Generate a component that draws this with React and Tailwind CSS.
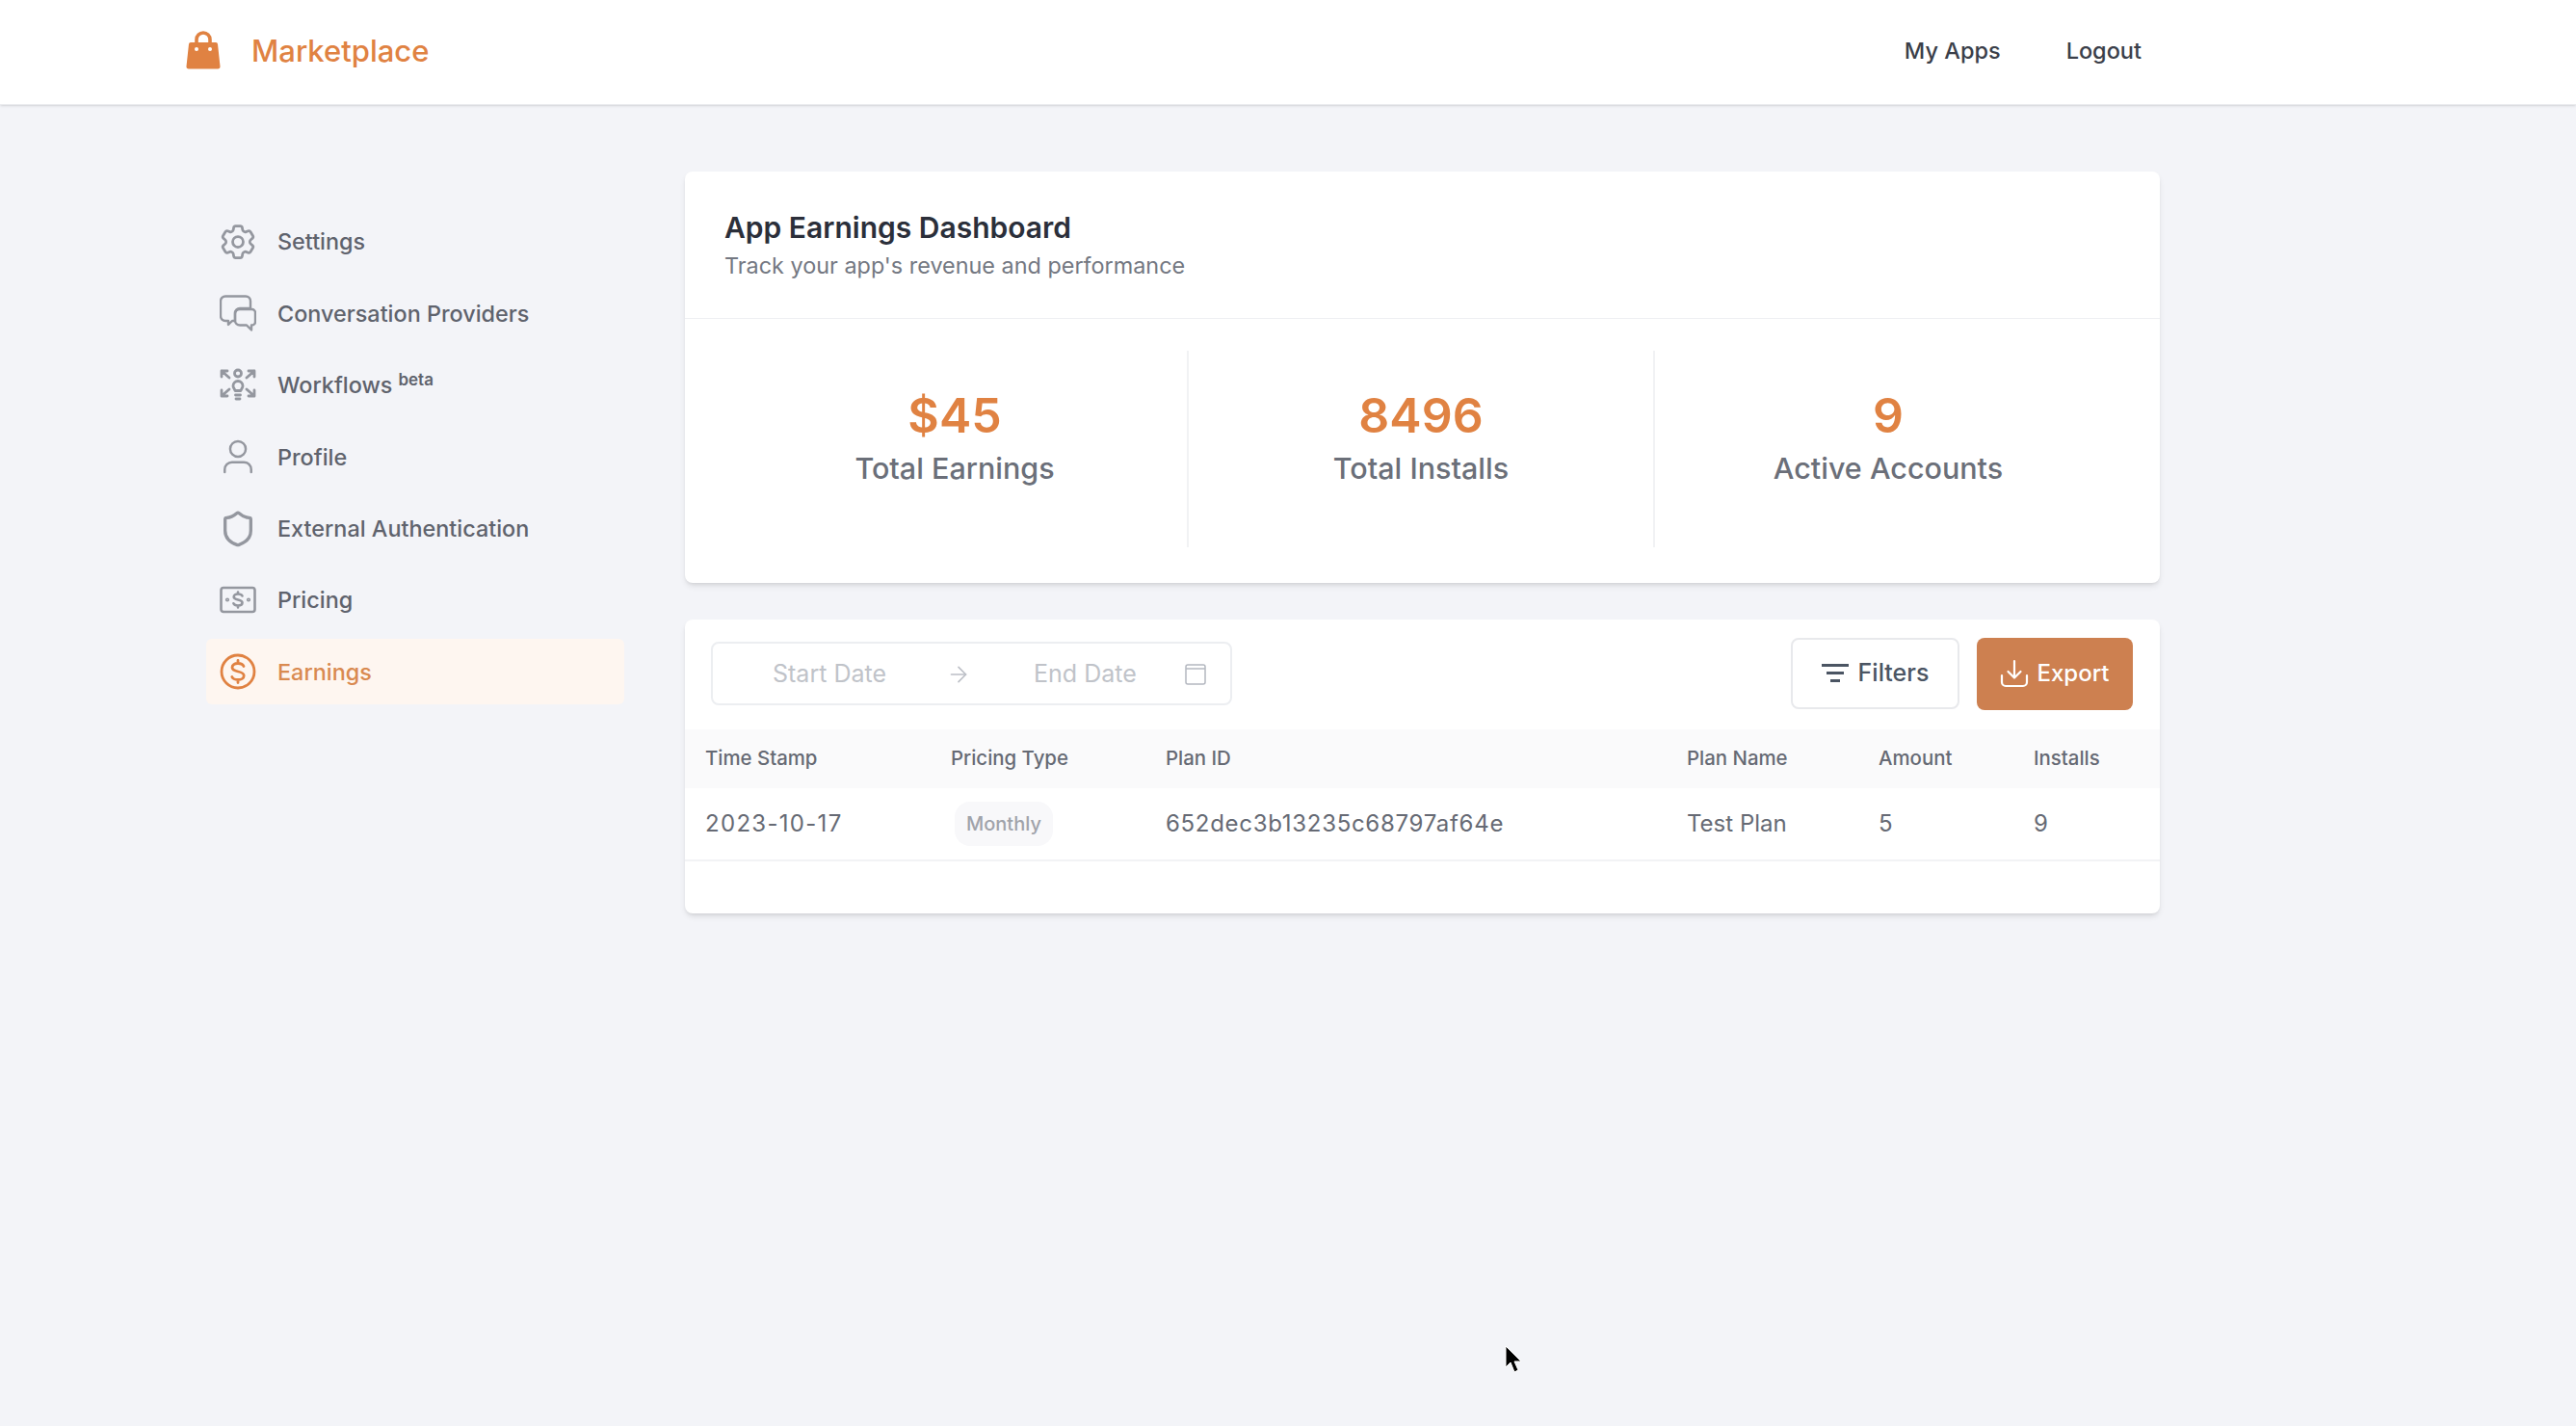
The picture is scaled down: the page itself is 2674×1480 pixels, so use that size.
import { HiOutlineCog6Tooth } from "react-icons/hi2";
import { Shield, ArrowRight } from "lucide-react";

function BagIcon() {
  return (
    <svg viewBox="0 0 36 40" className="mb-[4px] h-[40px] w-[36px] text-[#e08242]">
      <path d="M11 14V9a7 7 0 0 1 14 0v5" fill="none" stroke="currentColor" strokeWidth="3.600" />
      <path d="M5 12h26a2 2 0 0 1 2 1.800l2.500 23a2.500 2.500 0 0 1-2.500 2.700H3a2.500 2.500 0 0 1-2.500-2.700L3 13.800A2 2 0 0 1 5 12z" fill="currentColor" />
      <circle cx="11" cy="19" r="2" fill="#fff" />
      <circle cx="25" cy="19" r="2" fill="#fff" />
    </svg>
  );
}

function ChatIcon({ className }) {
  return (
    <svg viewBox="0 0 38 38" fill="none" stroke="currentColor" strokeWidth="2.4" strokeLinejoin="round" strokeLinecap="round" className={className}>
      <path d="M6 1.500h21a5 5 0 0 1 5 5V14H21a5 5 0 0 0-5 5v8h-3l-4 4v-4H6a5 5 0 0 1-5-5V6.500a5 5 0 0 1 5-5z" />
      <path d="M21 15h12.500a3.500 3.500 0 0 1 3.500 3.500v9.500a3.500 3.500 0 0 1-3.500 3.500H33v5l-5-5h-7a5 5 0 0 1-5-5v-6.500a5 5 0 0 1 5-5z" />
    </svg>
  );
}

function WorkflowIcon({ className }) {
  return (
    <svg viewBox="0 0 38 38" fill="none" stroke="currentColor" strokeWidth="2.8" strokeLinejoin="round" strokeLinecap="round" className={className}>
      <circle cx="19" cy="6.500" r="3.500" />
      <path d="M14 19.500a5 5 0 1 1 10 0c0 2-1.500 3-2 5h-6c-.5-2-2-3-2-5z" />
      <path d="M16.500 29h5M17 33h4" />
      <path d="M10 11L2 4M2 10V4h6" />
      <path d="M28 11l8-7M36 10V4h-6" />
      <path d="M10 23l-8 7M2 24v6h6" />
      <path d="M28 23l8 7M36 24v6h-6" />
    </svg>
  );
}

function ProfileIcon({ className }) {
  return (
    <svg viewBox="0 0 38 38" fill="none" stroke="currentColor" strokeWidth="2.600" strokeLinecap="round" className={className}>
      <circle cx="19" cy="10.500" r="8.500" />
      <path d="M4.500 36v-3a8 8 0 0 1 8-8h13a8 8 0 0 1 8 8v3" />
    </svg>
  );
}

function PricingIcon({ className }) {
  return (
    <svg viewBox="0 0 38 38" fill="none" stroke="currentColor" strokeWidth="2.600" strokeLinecap="round" className={className}>
      <rect x="1.500" y="6" width="35" height="25" rx="2.500" />
      <path d="M23.500 14.500c-.6-1.300-2.300-2-4.500-2-2.500 0-4.300 1.100-4.300 3 0 4 8.800 2 8.800 6 0 1.900-1.900 3-4.500 3-2.300 0-4-.8-4.600-2.200M19 10.500v2M19 24.500v2" />
      <circle cx="8" cy="18.500" r=".8" />
      <circle cx="30" cy="18.500" r=".8" />
    </svg>
  );
}

function DollarIcon({ className }) {
  return (
    <svg viewBox="0 0 38 38" fill="none" stroke="currentColor" strokeWidth="2.800" strokeLinecap="round" className={className}>
      <circle cx="19" cy="19" r="17" />
      <path d="M25 13.500c-.8-1.900-3-3-6-3-3.500 0-6 1.700-6 4.300 0 5.700 12.200 2.700 12.200 8.400 0 2.600-2.700 4.300-6.200 4.300-3 0-5.300-1.100-6.200-3M19 7.500v3M19 27.500v3" />
    </svg>
  );
}

function FilterIcon() {
  return (
    <svg viewBox="0 0 28 22" className="h-[22px] w-[28px] fill-[#4b5563]">
      <rect x="0" y="1" width="28" height="3" />
      <rect x="5" y="9" width="18" height="3" />
      <rect x="9" y="17" width="10" height="3" />
    </svg>
  );
}

function ExportIcon() {
  return (
    <svg viewBox="0 0 30 30" fill="none" stroke="currentColor" strokeWidth="2.200" strokeLinecap="round" strokeLinejoin="round" className="h-[30px] w-[30px]">
      <path d="M15 2v17M8.500 13l6.500 6.500 6.500-6.500" />
      <path d="M2 17v7a4 4 0 0 0 4 4h18a4 4 0 0 0 4-4v-7" />
    </svg>
  );
}

function CalendarIcon() {
  return (
    <svg viewBox="0 0 24 24" fill="none" stroke="currentColor" strokeWidth="1.500" className="h-[24px] w-[24px] text-[#b4b8c0]">
      <rect x="2" y="2" width="20" height="20" rx="2" />
      <path d="M2 6h20" />
    </svg>
  );
}

const navItems = [
  { label: "Settings", icon: HiOutlineCog6Tooth, size: "h-[44px] w-[44px]" },
  { label: "Conversation Providers", icon: ChatIcon, size: "h-[38px] w-[38px]" },
  { label: "Workflows", icon: WorkflowIcon, size: "h-[38px] w-[38px]", beta: true },
  { label: "Profile", icon: ProfileIcon, size: "h-[36px] w-[36px]" },
  { label: "External Authentication", icon: Shield, size: "h-[40px] w-[40px]" },
  { label: "Pricing", icon: PricingIcon, size: "h-[38px] w-[38px]" },
  { label: "Earnings", icon: DollarIcon, size: "h-[38px] w-[38px]", active: true },
];

const stats = [
  { value: "$45", label: "Total Earnings" },
  { value: "8496", label: "Total Installs" },
  { value: "9", label: "Active Accounts" },
];

const headers = ["Time Stamp", "Pricing Type", "Plan ID", "Plan Name", "Amount", "Installs"];

export default function App() {
  return (
    <div className="relative min-h-screen overflow-hidden bg-[#f3f4f8] font-[Inter,sans-serif]">

      {/* HEADER */}
      <header className="flex h-[109px] items-center justify-between border-b border-[#eaebee] bg-white pl-[193px] pr-[451px] shadow-sm">
        <div className="flex items-center">
          <BagIcon />
          <span className="mb-[2px] ml-[32px] text-[31px] font-medium text-[#e08242]">Marketplace</span>
        </div>
        <nav className="mb-[2px] flex gap-[68px] text-[23.5px] font-medium text-[#3b3f4a]">
          <span>My Apps</span>
          <span>Logout</span>
        </nav>
      </header>

      <div className="flex pl-[214px]">

        {/* SIDEBAR */}
        <aside className="flex w-[434px] shrink-0 flex-col gap-[6.4px] pt-[108px]">
          {navItems.map((item) => {
            const Icon = item.icon;
            return (
              <div
                key={item.label}
                className={
                  item.active
                    ? "flex h-[68px] items-center rounded-md bg-[#fef6f0] text-[#d98a50]"
                    : "flex h-[68px] items-center rounded-md text-[#5f636d]"
                }
              >
                <span className={item.active ? "mr-[8px] flex w-[66px] justify-center text-[#e08242]" : "mr-[8px] flex w-[66px] justify-center text-[#94979f]"}>
                  <Icon className={item.size} />
                </span>
                <span className="text-[23.4px] font-medium">{item.label}</span>
                {item.beta && <span className="mb-[10px] ml-[6px] text-[17px] font-semibold">beta</span>}
              </div>
            );
          })}
        </aside>

        {/* MAIN */}
        <main className="ml-[63px] w-[1531px] pt-[69px]">
          <section className="rounded-lg bg-white shadow-md">
            <div className="h-[153px] border-b border-[#eeeff2] pl-[41px] pt-[36px]">
              <h1 className="text-[30px] font-semibold leading-[44px] text-[#2b2f3a]">App Earnings Dashboard</h1>
              <p className="text-[23.4px] leading-[36px] text-[#747882]">Track your app's revenue and performance</p>
            </div>
            <div className="grid h-[274px] grid-cols-3 pb-[37px] pl-[39px] pr-[40px] pt-[33px]">
              {stats.map((stat, i) => (
                <div key={stat.label} className={i < 2 ? "border-r-2 border-[#f1f2f4] pt-[34px] text-center" : "pt-[34px] text-center"}>
                  <div className="text-[50px] font-semibold leading-[66px] text-[#e08242]">{stat.value}</div>
                  <div className="text-[30.5px] font-medium leading-[44px] text-[#6b6f79]">{stat.label}</div>
                </div>
              ))}
            </div>
          </section>

          <section className="mt-[38px] rounded-lg bg-white pb-[54px] shadow-md">
            <div className="flex h-[114px] items-center justify-between pb-[2px] pl-[27px] pr-[28px]">
              <div className="flex h-[66px] w-[541px] items-center rounded-lg border-2 border-[#eceef1] pl-[62px] pt-[2px] text-[25px] text-[#c0c3c9]">
                <span className="w-[180px]">Start Date</span>
                <ArrowRight className="h-[26px] w-[26px] text-[#bcbfc6]" strokeWidth={1.5} />
                <span className="ml-[65px] w-[156px]">End Date</span>
                <CalendarIcon />
              </div>
              <div className="flex gap-[18px]">
                <button className="flex h-[74px] w-[175px] items-center justify-center gap-[10px] rounded-lg border-2 border-[#e8e9ec] text-[25px] font-medium text-[#4b5563]">
                  <FilterIcon />
                  Filters
                </button>
                <button className="flex h-[75px] w-[162px] items-center justify-center gap-[8px] rounded-lg bg-[#cd8050] text-[24px] font-medium text-white">
                  <ExportIcon />
                  Export
                </button>
              </div>
            </div>

            <table className="w-full table-fixed border-collapse text-left">
              <colgroup>
                <col className="w-[255px]" />
                <col className="w-[223px]" />
                <col className="w-[541px]" />
                <col className="w-[199px]" />
                <col className="w-[161px]" />
                <col />
              </colgroup>
              <thead>
                <tr className="h-[61px] bg-[#fafafb] text-[20.4px] font-medium text-[#666a74]">
                  {headers.map((h) => (
                    <th key={h} className="pl-[21px] font-medium">{h}</th>
                  ))}
                </tr>
              </thead>
              <tbody>
                <tr className="h-[75px] border-b-2 border-[#f2f3f5] text-[24px] text-[#666a74]">
                  <td className="pl-[21px] tracking-[1.3px]">2023-10-17</td>
                  <td className="pl-[25px]">
                    <span className="inline-block rounded-2xl bg-[#f8f8fa] px-[12px] py-[8px] text-[20px] font-medium leading-[30px] text-[#a0a3aa]">Monthly</span>
                  </td>
                  <td className="pl-[21px] tracking-[0.7px]">652dec3b13235c68797af64e</td>
                  <td className="pl-[21px]">Test Plan</td>
                  <td className="pl-[21px]">5</td>
                  <td className="pl-[21px]">9</td>
                </tr>
              </tbody>
            </table>
          </section>
        </main>
      </div>

      {/* mouse pointer from the recording */}
      <svg viewBox="0 0 18 30" className="absolute left-[1562px] top-[1396px] h-[30px] w-[18px]">
        <path d="M1 1v22l5-5 4 10 4-2-4-9h7z" fill="#000" stroke="#fff" strokeWidth="1" />
      </svg>
    </div>
  );
}
